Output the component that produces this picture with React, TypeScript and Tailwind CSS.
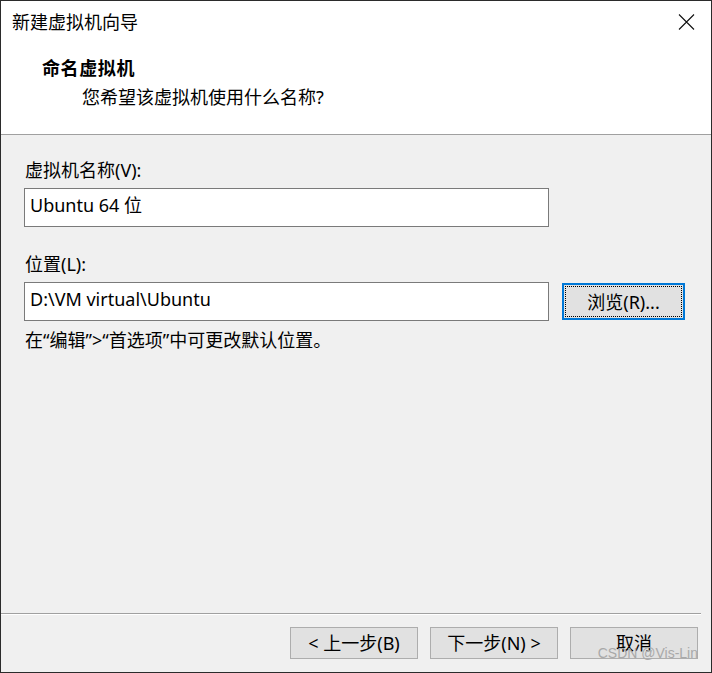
import React from "react";

const font = "font-['Segoe_UI','Noto_Sans','Noto_Sans_CJK_SC',sans-serif]";

function Btn({ children }: { children: React.ReactNode }) {
  return (
    <div className="w-[128px] h-[32px] border border-[#adadad] bg-[#e1e1e1] flex items-center justify-center text-[18px] leading-[24px] text-black">
      {children}
    </div>
  );
}

export default function App() {
  return (
    <div className={`w-[712px] h-[673px] border border-[#2b2b2b] bg-[#f0f0f0] flex flex-col relative text-black ${font}`}>
      {/* header */}
      <div className="h-[134px] bg-white border-b border-[#a0a0a0] flex flex-col shrink-0">
        <div className="h-[42px] flex items-center justify-between pl-[11px] pr-[16px]">
          <span className="text-[18px] leading-[24px]">新建虚拟机向导</span>
          <svg width="17" height="16" viewBox="0 0 17 16" fill="none">
            <path d="M1 0.5 L16 15.5 M16 0.5 L1 15.5" stroke="#111" strokeWidth="1.1" />
          </svg>
        </div>
        <div className="mt-[13px] pl-[41px] text-[18px] leading-[24px] font-bold tracking-[0.6px]">命名虚拟机</div>
        <div className="mt-[5px] pl-[81px] text-[18px] leading-[24px]">您希望该虚拟机使用什么名称?</div>
      </div>

      {/* body */}
      <div className="flex-1 flex flex-col pt-[23px] pl-[23px]">
        <div className="pl-[1px] text-[18px] leading-[24px]">虚拟机名称(V):</div>
        <div className="mt-[6px] w-[525px] h-[39px] border border-[#7a7a7a] bg-white flex items-start pl-[5px] pt-[4px] text-[18px] leading-[24px]">
          Ubuntu 64 位
        </div>
        <div className="mt-[25px] pl-[1px] text-[18px] leading-[24px]">位置(L):</div>
        <div className="mt-[6px] flex items-start">
          <div className="w-[525px] h-[39px] border border-[#7a7a7a] bg-white flex items-start pl-[5px] pt-[4px] text-[18px] leading-[24px]">
            D:\VM virtual\Ubuntu
          </div>
          <div className="ml-[13px] mt-[1px] w-[123px] h-[37px] border-2 border-[#0078d7] bg-[#e1e1e1] p-px">
            <div className="w-full h-full border border-dotted border-black flex items-center justify-center text-[18px] leading-[24px]">
              浏览(R)...
            </div>
          </div>
        </div>
        <div className="mt-[7px] pl-[1px] text-[18px] leading-[24px]">在“编辑”&gt;“首选项”中可更改默认位置。</div>
      </div>

      {/* footer */}
      <div className="h-[59px] shrink-0 flex flex-col">
        <div className="w-[700px] h-px bg-[#a0a0a0]" />
        <div className="w-[700px] h-px bg-white" />
        <div className="mt-[12px] flex justify-end gap-[12px] pr-[13px]">
          <Btn>&lt; 上一步(B)</Btn>
          <Btn>下一步(N) &gt;</Btn>
          <Btn>取消</Btn>
        </div>
      </div>

      <div className="absolute right-[13px] top-[643px] text-[14px] leading-[18px] text-[#a9a9a9] font-['Liberation_Sans','Noto_Sans',sans-serif]">
        CSDN @Vis-Lin
      </div>
    </div>
  );
}
